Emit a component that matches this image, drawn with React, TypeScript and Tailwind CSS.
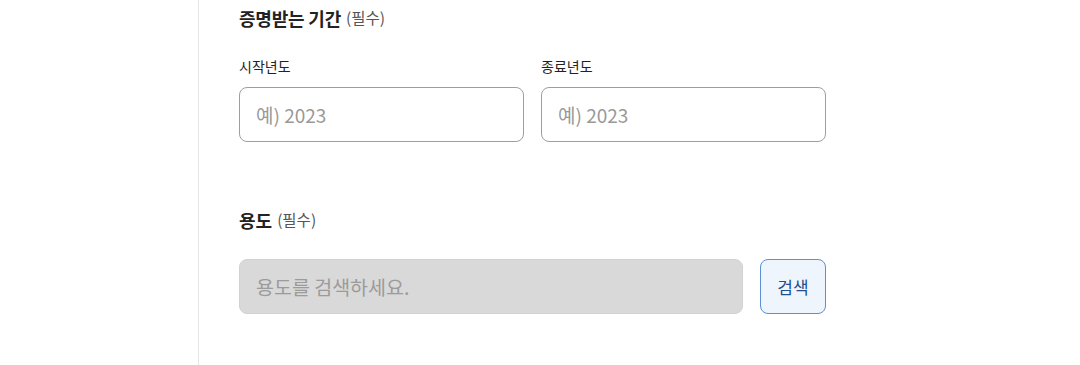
import React from "react";

const font = { fontFamily: '"Noto Sans CJK KR", "Noto Sans", sans-serif' };

export default function App() {
  return (
    <div className="flex w-[1080px] h-[365px] bg-white overflow-hidden" style={font}>
      <div className="w-[199px] h-full border-r border-[#e5e5e5] shrink-0" />
      <div className="pl-10 pt-[6px] w-[627px]">
        <div className="h-6 flex items-center">
          <span className="text-[18px] font-bold text-[#222] tracking-[-0.2px]">증명받는 기간</span>
          <span className="ml-[5px] text-[15.5px] text-[#555]">(필수)</span>
        </div>
        <div className="flex gap-[17px] mt-[26px]">
          <div className="flex-1">
            <div className="h-5 flex items-center text-[14px] text-[#222]">시작년도</div>
            <input
              className="mt-[11px] w-full h-[55px] rounded-lg border border-[#9e9e9e] px-4 text-[19px] text-[#333] placeholder:text-[#999] outline-none"
              placeholder="예) 2023"
              style={font}
            />
          </div>
          <div className="flex-1">
            <div className="h-5 flex items-center text-[14px] text-[#222]">종료년도</div>
            <input
              className="mt-[11px] w-full h-[55px] rounded-lg border border-[#9e9e9e] px-4 text-[19px] text-[#333] placeholder:text-[#999] outline-none"
              placeholder="예) 2023"
              style={font}
            />
          </div>
        </div>
        <div className="h-6 flex items-center mt-[66px]">
          <span className="text-[18px] font-bold text-[#222]">용도</span>
          <span className="ml-[5px] text-[15.5px] text-[#555]">(필수)</span>
        </div>
        <div className="flex gap-[17px] mt-[27px]">
          <input
            disabled
            className="flex-1 h-[55px] rounded-lg bg-[#d9d9d9] border border-[#d2d2d2] px-4 text-[19.5px] placeholder:text-[#9b9b9b] outline-none"
            placeholder="용도를 검색하세요."
            style={font}
          />
          <button
            className="w-[66px] h-[55px] rounded-lg bg-[#eef5fd] border border-[#5d8fd3] text-[17px] text-[#1f4f8f]"
            style={font}
          >
            검색
          </button>
        </div>
      </div>
    </div>
  );
}
